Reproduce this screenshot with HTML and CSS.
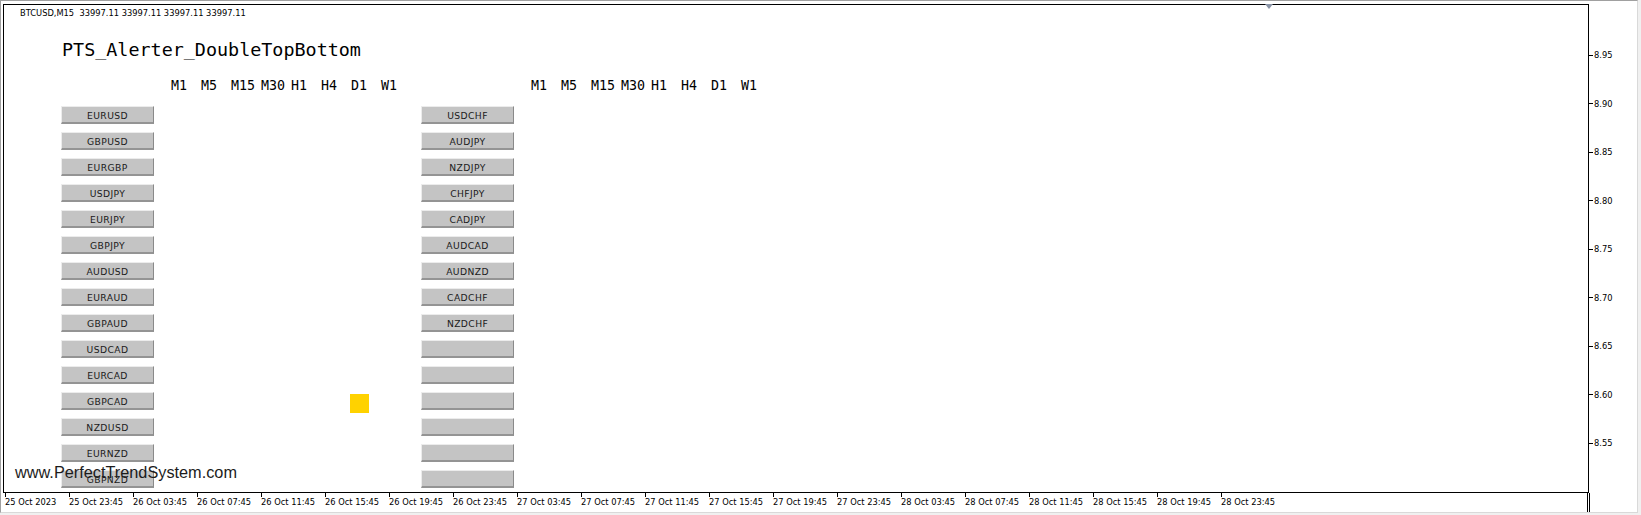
FILE: index.html
```html
<!DOCTYPE html>
<html>
<head>
<meta charset="utf-8">
<title>PTS_Alerter_DoubleTopBottom</title>
<link rel="stylesheet" href="styles.css">
</head>
<body>
<div class="window">
  <div class="main">
    <div class="chart">
      <div class="info">BTCUSD,M15  33997.11 33997.11 33997.11 33997.11</div>
      <div class="title">PTS_Alerter_DoubleTopBottom</div>
      <div class="panel">
        <div class="group">
          <span></span><span class="tf">M1</span><span class="tf">M5</span><span class="tf">M15</span><span class="tf">M30</span><span class="tf">H1</span><span class="tf">H4</span><span class="tf">D1</span><span class="tf">W1</span>
          <div class="btn">EURUSD</div>
          <div class="btn">GBPUSD</div>
          <div class="btn">EURGBP</div>
          <div class="btn">USDJPY</div>
          <div class="btn">EURJPY</div>
          <div class="btn">GBPJPY</div>
          <div class="btn">AUDUSD</div>
          <div class="btn">EURAUD</div>
          <div class="btn">GBPAUD</div>
          <div class="btn">USDCAD</div>
          <div class="btn">EURCAD</div>
          <div class="btn">GBPCAD</div>
          <div class="btn">NZDUSD</div>
          <div class="btn">EURNZD</div>
          <div class="btn">GBPNZD</div>
          <div class="signal"></div>
        </div>
        <div class="group">
          <span></span><span class="tf">M1</span><span class="tf">M5</span><span class="tf">M15</span><span class="tf">M30</span><span class="tf">H1</span><span class="tf">H4</span><span class="tf">D1</span><span class="tf">W1</span>
          <div class="btn">USDCHF</div>
          <div class="btn">AUDJPY</div>
          <div class="btn">NZDJPY</div>
          <div class="btn">CHFJPY</div>
          <div class="btn">CADJPY</div>
          <div class="btn">AUDCAD</div>
          <div class="btn">AUDNZD</div>
          <div class="btn">CADCHF</div>
          <div class="btn">NZDCHF</div>
          <div class="btn"></div>
          <div class="btn"></div>
          <div class="btn"></div>
          <div class="btn"></div>
          <div class="btn"></div>
          <div class="btn"></div>
        </div>
      </div>
      <div class="shift-marker"></div>
      <div class="watermark">www.PerfectTrendSystem.com</div>
    </div>
    <div class="price-axis">
      <div class="price">8.95</div>
      <div class="price">8.90</div>
      <div class="price">8.85</div>
      <div class="price">8.80</div>
      <div class="price">8.75</div>
      <div class="price">8.70</div>
      <div class="price">8.65</div>
      <div class="price">8.60</div>
      <div class="price">8.55</div>
    </div>
  </div>
  <div class="time-axis">
    <div class="ticks">
      <div class="t">25 Oct 2023</div>
      <div class="t">25 Oct 23:45</div>
      <div class="t">26 Oct 03:45</div>
      <div class="t">26 Oct 07:45</div>
      <div class="t">26 Oct 11:45</div>
      <div class="t">26 Oct 15:45</div>
      <div class="t">26 Oct 19:45</div>
      <div class="t">26 Oct 23:45</div>
      <div class="t">27 Oct 03:45</div>
      <div class="t">27 Oct 07:45</div>
      <div class="t">27 Oct 11:45</div>
      <div class="t">27 Oct 15:45</div>
      <div class="t">27 Oct 19:45</div>
      <div class="t">27 Oct 23:45</div>
      <div class="t">28 Oct 03:45</div>
      <div class="t">28 Oct 07:45</div>
      <div class="t">28 Oct 11:45</div>
      <div class="t">28 Oct 15:45</div>
      <div class="t">28 Oct 19:45</div>
      <div class="t">28 Oct 23:45</div>
    </div>
    <div class="corner"></div>
  </div>
</div>
</body>
</html>
```

FILE: styles.css
```css
html, body {
  margin: 0;
  padding: 0;
}

body {
  width: 1641px;
  height: 515px;
  overflow: hidden;
  background: #f0f0f0;
  font-family: "DejaVu Sans", Verdana, sans-serif;
  color: #000;
}

.window {
  box-sizing: border-box;
  width: 1638px;
  height: 513px;
  background: #fff;
  border-top: 1px solid #a0a0a0;
  border-left: 1px solid #a0a0a0;
  border-right: 1px solid #d9d9d9;
  border-bottom: 1px solid #d9d9d9;
  padding: 3px 0 0 2px;
  display: flex;
  flex-direction: column;
}

.main {
  display: flex;
  flex: none;
}

.chart {
  position: relative;
  box-sizing: border-box;
  flex: none;
  width: 1586px;
  height: 489px;
  border: 1px solid #000;
}

.info {
  margin: 3px 0 0 16px;
  font-size: 8.3px;
  line-height: 10px;
  white-space: pre;
}

.title {
  margin: 21px 0 0 58px;
  font-family: "DejaVu Sans Mono", monospace;
  font-size: 18.4px;
  line-height: 22px;
}

.panel {
  display: flex;
  gap: 11px;
  margin: 17px 0 0 57px;
}

.group {
  display: grid;
  grid-template-columns: 109px repeat(8, 30px);
  grid-template-rows: 20px;
  grid-auto-rows: 18px;
  row-gap: 8px;
}

.tf {
  font-family: "DejaVu Sans Mono", monospace;
  font-size: 13.3px;
  line-height: 16px;
  padding-left: 1px;
  white-space: nowrap;
}

.btn {
  grid-column: 1;
  box-sizing: border-box;
  width: 93px;
  height: 18px;
  padding-top: 2px;
  background: #c4c4c4;
  border-top: 1px solid #ececec;
  border-left: 1px solid #ececec;
  border-right: 1px solid #8a8a8a;
  border-bottom: 2px solid #949494;
  font-size: 9.2px;
  letter-spacing: 0.4px;
  line-height: 13px;
  text-align: center;
  color: #1a1a1a;
}

.signal {
  grid-row: 13;
  grid-column: 8;
  width: 19px;
  height: 19px;
  margin-top: 2px;
  background: #ffd200;
}

.shift-marker {
  position: absolute;
  top: -1px;
  left: 1261px;
  width: 0;
  height: 0;
  border-left: 4px solid transparent;
  border-right: 4px solid transparent;
  border-top: 5px solid #8a94a6;
}

.watermark {
  position: absolute;
  left: 11px;
  top: 458px;
  font-family: "Liberation Sans", Arial, sans-serif;
  font-size: 16.3px;
  line-height: 18px;
  color: #1c1c1c;
  white-space: nowrap;
}

.price-axis {
  flex: none;
  width: 48px;
  padding-top: 27px;
  display: flex;
  flex-direction: column;
}

.price {
  height: 48.5px;
  display: flex;
  align-items: center;
  font-size: 8.3px;
  line-height: 10px;
}

.price::before {
  content: "";
  width: 4px;
  height: 1px;
  background: #000;
  margin-right: 1px;
}

.time-axis {
  flex: 1;
  display: flex;
}

.ticks {
  display: flex;
  margin-left: 2px;
}

.t {
  flex: none;
  width: 64px;
  font-size: 8.3px;
  line-height: 10px;
  white-space: nowrap;
}

.t::before {
  content: "";
  display: block;
  width: 1px;
  height: 4px;
  background: #000;
}

.corner {
  margin-left: auto;
  margin-right: 47px;
  width: 1px;
  border-left: 1px solid #000;
  border-right: 1px solid #000;
}
```
